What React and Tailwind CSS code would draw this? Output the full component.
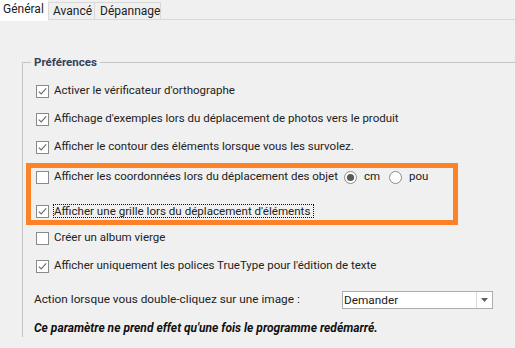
import React from 'react'

const font = { fontFamily: 'Roboto, "Noto Sans", sans-serif' }

function Box({ checked }) {
    return (
        <svg width="13" height="13" viewBox="0 0 13 13" className="shrink-0">
            <rect x="0.5" y="0.5" width="12" height="12" fill="#fff" stroke="#8a8a8a" />
            {checked && <polyline points="2.8,6.6 5.2,9 10.2,3.4" fill="none" stroke="#6f6f6f" strokeWidth="1.2" />}
        </svg>
    )
}

function Radio({ on }) {
    return (
        <svg width="13" height="13" viewBox="0 0 13 13" className="shrink-0">
            <circle cx="6.5" cy="6.5" r="6" fill="#fff" stroke="#8a8a8a" />
            {on && <circle cx="6.5" cy="6.5" r="3.6" fill="#5a5a5a" />}
        </svg>
    )
}

function Row({ checked, children, h = 'h-[28px]' }) {
    return (
        <div className={`flex items-center ${h}`}>
            <Box checked={checked} />
            <span className="ml-[5px] whitespace-nowrap">{children}</span>
        </div>
    )
}

export default function App() {
    return (
        <div className="w-[515px] h-[348px] overflow-hidden bg-[#f0f0f0] text-[11.5px] text-[#222]" style={font}>
            {/* tabs */}
            <div className="flex h-[20px] border-b border-[#d9d9d9] text-[12px]">
                <div className="w-[48px] h-[21px] bg-white pl-[3px] leading-[18px] whitespace-nowrap relative">Général</div>
                <div className="w-[47px] mt-[2px] border border-b-0 border-[#d9d9d9] pl-[4px] leading-[17px] whitespace-nowrap">Avancé</div>
                <div className="w-[66px] mt-[2px] border border-b-0 border-l-0 border-[#d9d9d9] pl-[5px] leading-[17px] whitespace-nowrap">Dépannage</div>
            </div>

            {/* group */}
            <div className="relative mt-[42px] ml-[22px] border-t border-l border-[#c4c4c4] pl-[13px] pt-[14px]">
                <span className="absolute left-[8px] top-[-9px] px-[3px] bg-[#f0f0f0] font-bold text-[#34405a] leading-[16px]">Préférences</span>

                <Row checked>Activer le vérificateur d'orthographe</Row>
                <Row checked>Affichage d'exemples lors du déplacement de photos vers le produit</Row>
                <Row checked>Afficher le contour des éléments lorsque vous les survolez.</Row>

                <div className="mt-[2px] -ml-[10px] w-[432px] border-[5px] border-[#fd8127] pl-[5px]">
                    <div className="flex items-center h-[18px]">
                        <Box />
                        <span className="ml-[5px] whitespace-nowrap">Afficher les coordonnées lors du déplacement des objet</span>
                        <span className="ml-[6px]"><Radio on /></span>
                        <span className="ml-[7px]">cm</span>
                        <span className="ml-[9px]"><Radio /></span>
                        <span className="ml-[7px]">pou</span>
                    </div>
                    <div className="flex items-center h-[18px] mt-[16px]">
                        <Box checked />
                        <span className="ml-[4px] whitespace-nowrap border border-dotted border-[#111] leading-[12px] h-[14px] pr-[3px] text-[11.6px]">Afficher une grille lors du déplacement d'éléments</span>
                    </div>
                </div>

                <div className="mt-[1px]">
                    <Row h="h-[24px]">Créer un album vierge</Row>
                </div>
                <div className="mt-[2px]">
                    <Row checked>Afficher uniquement les polices TrueType pour l'édition de texte</Row>
                </div>

                <div className="flex items-center h-[39px] -ml-[2px]">
                    <span className="w-[308px] whitespace-nowrap text-[11.8px]">Action lorsque vous double-cliquez sur une image :</span>
                    <div className="flex w-[151px] h-[18px] border border-[#adadad] bg-white">
                        <span className="flex-1 pl-[1px] leading-[16px] text-[11.8px]">Demander</span>
                        <div className="w-[16px] flex items-center justify-center border-l border-[#dcdcdc]">
                            <svg width="7" height="4" viewBox="0 0 7 4"><polygon points="0,0 7,0 3.5,4" fill="#606060" /></svg>
                        </div>
                    </div>
                </div>

                <div className="h-[18px] flex items-center -ml-[2px] font-bold italic text-[12px] text-[#111] whitespace-nowrap">
                    Ce paramètre ne prend effet qu'une fois le programme redémarré.
                </div>
            </div>
        </div>
    )
}
